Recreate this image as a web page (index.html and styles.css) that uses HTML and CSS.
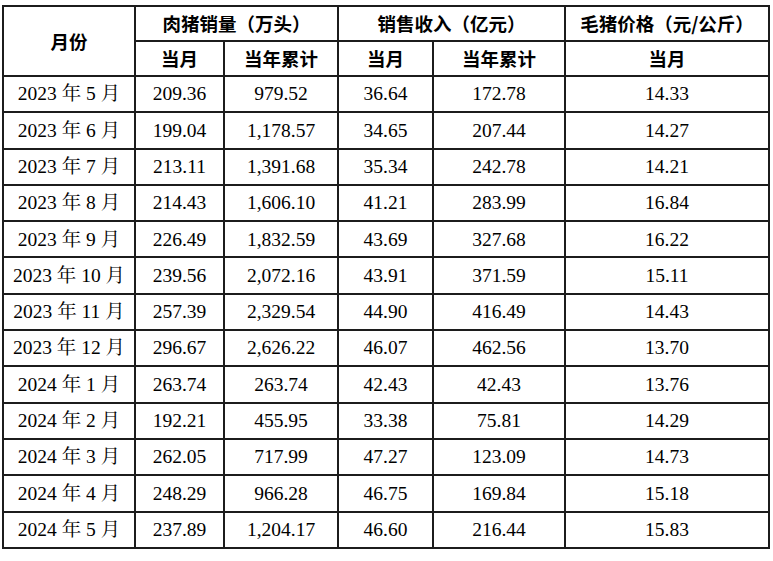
FILE: index.html
```html
<!DOCTYPE html>
<html lang="zh">
<head>
<meta charset="utf-8">
<link rel="stylesheet" href="styles.css">
</head>
<body>
<div class="wrap">
<table class="sales">
<colgroup>
<col class="c1"><col class="c2"><col class="c3"><col class="c4"><col class="c5"><col class="c6">
</colgroup>
<thead>
<tr class="h1">
<th rowspan="2">月份</th>
<th colspan="2">肉猪销量（万头）</th>
<th colspan="2">销售收入（亿元）</th>
<th>毛猪价格（元/公斤）</th>
</tr>
<tr class="h2">
<th>当月</th><th>当年累计</th><th>当月</th><th>当年累计</th><th>当月</th>
</tr>
</thead>
<tbody>
<tr><td>2023 年 5 月</td><td>209.36</td><td>979.52</td><td>36.64</td><td>172.78</td><td>14.33</td></tr>
<tr><td>2023 年 6 月</td><td>199.04</td><td>1,178.57</td><td>34.65</td><td>207.44</td><td>14.27</td></tr>
<tr><td>2023 年 7 月</td><td>213.11</td><td>1,391.68</td><td>35.34</td><td>242.78</td><td>14.21</td></tr>
<tr><td>2023 年 8 月</td><td>214.43</td><td>1,606.10</td><td>41.21</td><td>283.99</td><td>16.84</td></tr>
<tr><td>2023 年 9 月</td><td>226.49</td><td>1,832.59</td><td>43.69</td><td>327.68</td><td>16.22</td></tr>
<tr><td>2023 年 10 月</td><td>239.56</td><td>2,072.16</td><td>43.91</td><td>371.59</td><td>15.11</td></tr>
<tr><td>2023 年 11 月</td><td>257.39</td><td>2,329.54</td><td>44.90</td><td>416.49</td><td>14.43</td></tr>
<tr><td>2023 年 12 月</td><td>296.67</td><td>2,626.22</td><td>46.07</td><td>462.56</td><td>13.70</td></tr>
<tr><td>2024 年 1 月</td><td>263.74</td><td>263.74</td><td>42.43</td><td>42.43</td><td>13.76</td></tr>
<tr><td>2024 年 2 月</td><td>192.21</td><td>455.95</td><td>33.38</td><td>75.81</td><td>14.29</td></tr>
<tr><td>2024 年 3 月</td><td>262.05</td><td>717.99</td><td>47.27</td><td>123.09</td><td>14.73</td></tr>
<tr><td>2024 年 4 月</td><td>248.29</td><td>966.28</td><td>46.75</td><td>169.84</td><td>15.18</td></tr>
<tr><td>2024 年 5 月</td><td>237.89</td><td>1,204.17</td><td>46.60</td><td>216.44</td><td>15.83</td></tr>
</tbody>
</table>
</div>
</body>
</html>
```

FILE: styles.css
```css
html, body {
  margin: 0;
  padding: 0;
  background: #ffffff;
}

.wrap {
  padding: 5px 0 0 2px;
}

.sales {
  border-collapse: collapse;
  table-layout: fixed;
  width: 766px;
  color: #000;
}

.c1 { width: 132px; }
.c2 { width: 89px; }
.c3 { width: 114px; }
.c4 { width: 95px; }
.c5 { width: 132px; }
.c6 { width: 204px; }

.sales th,
.sales td {
  border: 2px solid #1c1c1c;
  padding: 0;
  text-align: center;
  vertical-align: middle;
  white-space: nowrap;
}

.sales th {
  font-family: "Noto Sans CJK SC", "Noto Sans", sans-serif;
  font-weight: 700;
  font-size: 18.5px;
  line-height: 1;
}

.sales .h1 th { height: 33px; }
.sales .h2 th { height: 33px; }

.sales td {
  font-family: "Liberation Serif", "Noto Serif CJK SC", "Noto Sans CJK SC", serif;
  font-size: 19.5px;
  line-height: 1;
  height: 34.3px;
}
```
